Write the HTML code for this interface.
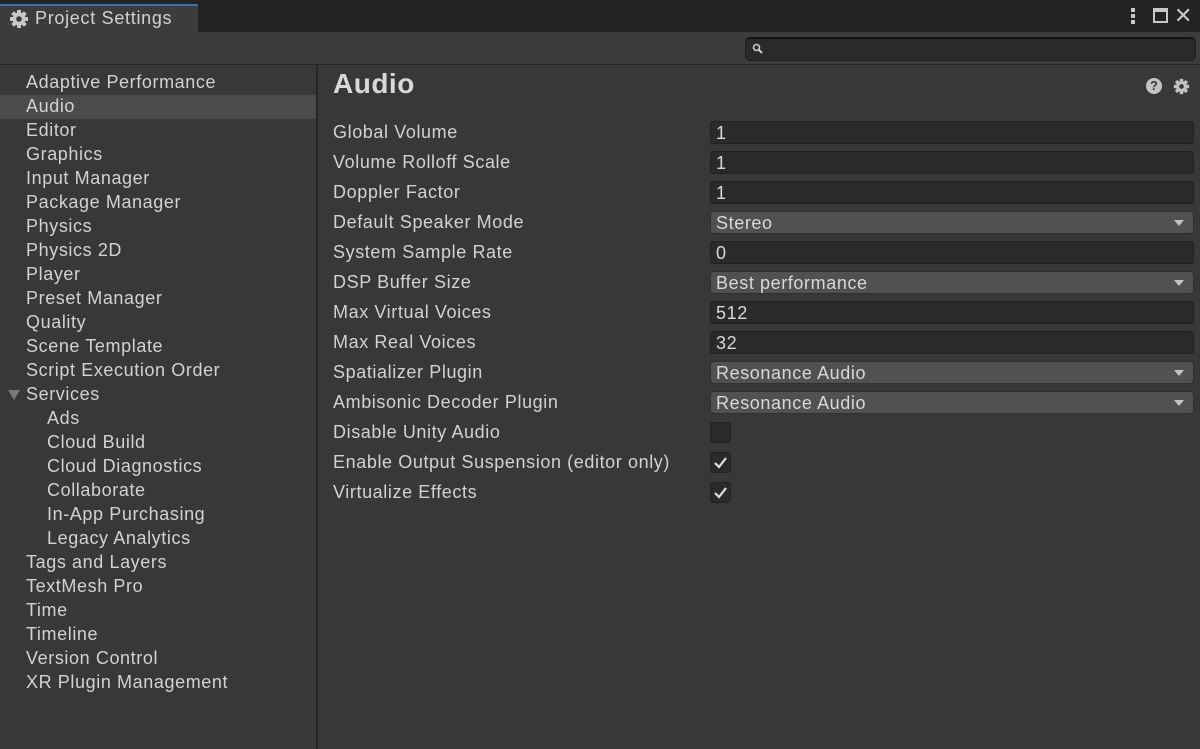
<!DOCTYPE html>
<html><head><style>
*{margin:0;padding:0;box-sizing:border-box}
body{width:1200px;height:749px;background:#383838;font-family:"Liberation Sans",sans-serif;color:#d2d2d2;position:relative;overflow:hidden;font-size:18px;letter-spacing:0.6px}
.a{position:absolute;white-space:nowrap}
.li{position:absolute;left:0;width:316px;height:24px;line-height:24px;padding-left:26px}
.lab{position:absolute;left:333px;height:30px;line-height:30px}
.f{position:absolute;left:710px;width:484px;height:23px;line-height:22px;padding-left:5px;background:#2a2a2a;border:1px solid #212121;border-radius:3px;color:#d8d8d8}
.d{background:#515151;border-color:#303030;border-radius:4px}
.d:after{content:"";position:absolute;right:9px;top:8px;border-left:5px solid transparent;border-right:5px solid transparent;border-top:6px solid #c4c4c4}
.cb{position:absolute;left:710px;width:21px;height:21px;background:#2a2a2a;border:1px solid #222;border-radius:3px}
</style></head><body>
<div class="a" style="left:0;top:0;width:1200px;height:32px;background:#232323"></div>
<div class="a" style="left:0;top:4px;width:198px;height:29px;background:#3c3c3c;border-top:2px solid #3a72b0"></div>
<svg class="a" style="left:9px;top:9px" width="20" height="20" viewBox="0 0 20 20"><g fill="#c8c8c8"><circle cx="10" cy="10" r="6.5"/><rect x="8" y="1" width="4" height="18"/><rect x="1" y="8" width="18" height="4"/><rect x="8" y="1" width="4" height="18" transform="rotate(45 10 10)"/><rect x="8" y="1" width="4" height="18" transform="rotate(-45 10 10)"/></g><circle cx="10" cy="10" r="2.8" fill="#3c3c3c"/></svg>
<div class="a" style="left:35px;top:8px;font-size:18px;letter-spacing:0.7px;color:#d2d2d2">Project Settings</div>
<div class="a" style="left:1131px;top:8px;width:4px;height:4px;background:#c8c8c8;box-shadow:0 6px #c8c8c8,0 12px #c8c8c8"></div>
<div class="a" style="left:1153px;top:8px;width:15px;height:15px;border:2px solid #c8c8c8;border-top-width:4px"></div>
<div class="a" style="left:1174px;top:3px;font-size:22px;color:#c8c8c8">✕</div>
<div class="a" style="left:0;top:32px;width:1200px;height:33px;background:#3c3c3c;border-bottom:1px solid #242424"></div>
<div class="a" style="left:745px;top:37px;width:451px;height:24px;background:#2a2a2a;border:1px solid #1e1e1e;border-top:2px solid #141414;border-radius:5px"></div>
<svg class="a" style="left:752px;top:43px" width="11" height="11" viewBox="0 0 11 11"><circle cx="4.5" cy="4.5" r="3" fill="none" stroke="#ccc" stroke-width="1.6"/><path d="M6.5 6.5 L10 10" stroke="#ccc" stroke-width="2"/></svg>
<div class="a" style="left:316px;top:65px;width:2px;height:684px;background:#262626"></div>
<div class="a" style="left:0;top:65px;width:316px;height:684px;background:#383838"></div>
<div class="a" style="left:0;top:95px;width:316px;height:24px;background:#4b4b4b"></div>
<div class="li" style="top:70px">Adaptive Performance</div>
<div class="li" style="top:94px">Audio</div>
<div class="li" style="top:118px">Editor</div>
<div class="li" style="top:142px">Graphics</div>
<div class="li" style="top:166px">Input Manager</div>
<div class="li" style="top:190px">Package Manager</div>
<div class="li" style="top:214px">Physics</div>
<div class="li" style="top:238px">Physics 2D</div>
<div class="li" style="top:262px">Player</div>
<div class="li" style="top:286px">Preset Manager</div>
<div class="li" style="top:310px">Quality</div>
<div class="li" style="top:334px">Scene Template</div>
<div class="li" style="top:358px">Script Execution Order</div>
<div class="li" style="top:382px">Services</div>
<div class="a" style="left:8px;top:390px;border-left:6px solid transparent;border-right:6px solid transparent;border-top:10px solid #7a7a7a"></div>
<div class="li" style="top:406px;padding-left:47px">Ads</div>
<div class="li" style="top:430px;padding-left:47px">Cloud Build</div>
<div class="li" style="top:454px;padding-left:47px">Cloud Diagnostics</div>
<div class="li" style="top:478px;padding-left:47px">Collaborate</div>
<div class="li" style="top:502px;padding-left:47px">In-App Purchasing</div>
<div class="li" style="top:526px;padding-left:47px">Legacy Analytics</div>
<div class="li" style="top:550px">Tags and Layers</div>
<div class="li" style="top:574px">TextMesh Pro</div>
<div class="li" style="top:598px">Time</div>
<div class="li" style="top:622px">Timeline</div>
<div class="li" style="top:646px">Version Control</div>
<div class="li" style="top:670px">XR Plugin Management</div>
<div class="a" style="left:333px;top:68px;font-size:28px;font-weight:bold;color:#d8d8d8;letter-spacing:0.5px">Audio</div>
<div class="a" style="left:1146px;top:78px;width:16px;height:16px;border-radius:50%;background:#c4c4c4;color:#383838;font-size:13px;font-weight:bold;text-align:center;line-height:16px;letter-spacing:0">?</div>
<svg class="a" style="left:1173px;top:78px" width="17" height="17" viewBox="0 0 20 20"><g fill="#c4c4c4"><circle cx="10" cy="10" r="6.5"/><rect x="8" y="1" width="4" height="18"/><rect x="1" y="8" width="18" height="4"/><rect x="8" y="1" width="4" height="18" transform="rotate(45 10 10)"/><rect x="8" y="1" width="4" height="18" transform="rotate(-45 10 10)"/></g><circle cx="10" cy="10" r="2.8" fill="#383838"/></svg>
<div class="lab" style="top:117px">Global Volume</div><div class="f" style="top:121px">1</div>
<div class="lab" style="top:147px">Volume Rolloff Scale</div><div class="f" style="top:151px">1</div>
<div class="lab" style="top:177px">Doppler Factor</div><div class="f" style="top:181px">1</div>
<div class="lab" style="top:207px">Default Speaker Mode</div><div class="f d" style="top:211px">Stereo</div>
<div class="lab" style="top:237px">System Sample Rate</div><div class="f" style="top:241px">0</div>
<div class="lab" style="top:267px">DSP Buffer Size</div><div class="f d" style="top:271px">Best performance</div>
<div class="lab" style="top:297px">Max Virtual Voices</div><div class="f" style="top:301px">512</div>
<div class="lab" style="top:327px">Max Real Voices</div><div class="f" style="top:331px">32</div>
<div class="lab" style="top:357px">Spatializer Plugin</div><div class="f d" style="top:361px">Resonance Audio</div>
<div class="lab" style="top:387px">Ambisonic Decoder Plugin</div><div class="f d" style="top:391px">Resonance Audio</div>
<div class="lab" style="top:417px">Disable Unity Audio</div><div class="cb" style="top:422px"></div>
<div class="lab" style="top:447px">Enable Output Suspension (editor only)</div><div class="cb" style="top:452px"><svg width="19" height="19" viewBox="0 0 19 19"><path d="M4 10 L8 14 L15 5" fill="none" stroke="#e0e0e0" stroke-width="2.2"/></svg></div>
<div class="lab" style="top:477px">Virtualize Effects</div><div class="cb" style="top:482px"><svg width="19" height="19" viewBox="0 0 19 19"><path d="M4 10 L8 14 L15 5" fill="none" stroke="#e0e0e0" stroke-width="2.2"/></svg></div>
</body></html>
